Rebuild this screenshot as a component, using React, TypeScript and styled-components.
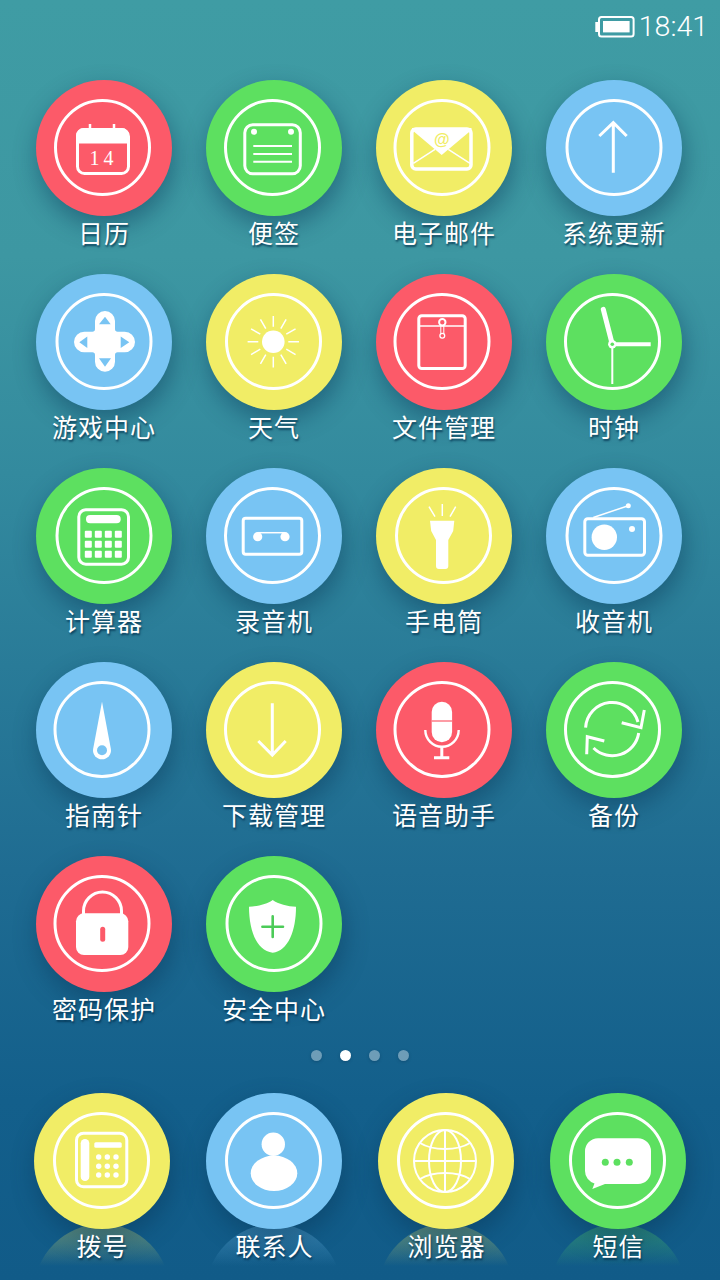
import React from 'react';
import styled, { createGlobalStyle } from 'styled-components';

const RED = '#fc5a69';
const GREEN = '#5de060';
const YELLOW = '#f1ed66';
const BLUE = '#78c4f3';
const WHITE = '#fff';

const GlobalStyle = createGlobalStyle`
    html, body {
        margin: 0;
        padding: 0;
        background: #135f8b;
    }
`;

const Styled = {
    Screen: styled.div`
        position: relative;
        width: 720px;
        height: 1280px;
        overflow: hidden;
        display: flex;
        flex-direction: column;
        background: linear-gradient(180deg, #3f9ca4 0%, #3d97a2 20%, #338a9e 37%, #297b98 52%, #1f6c92 68%, #135f8b 86%, #115b88 100%);
        font-family: 'Noto Sans CJK SC', 'Noto Sans', sans-serif;
    `,
    StatusBar: styled.div`
        height: 80px;
        box-sizing: border-box;
        padding: 11px 12px 0 0;
        display: flex;
        justify-content: flex-end;
        align-items: flex-start;
        gap: 4px;
    `,
    Battery: styled.svg`
        width: 40px;
        height: 24px;
        margin-top: 4px;
    `,
    Time: styled.span`
        font-family: Roboto, 'Liberation Sans', sans-serif;
        font-weight: 300;
        font-size: 28.5px;
        line-height: 32px;
        color: #fff;
    `,
    Grid: styled.div`
        display: grid;
        grid-template-columns: repeat(4, 170px);
        grid-auto-rows: 194px;
        padding: 0 19px;
    `,
    Cell: styled.div`
        position: relative;
        display: flex;
        flex-direction: column;
        align-items: center;
    `,
    Circle: styled.div<{ $color: string }>`
        position: relative;
        width: 136px;
        height: 136px;
        flex: none;
        border-radius: 50%;
        background: ${(p) => p.$color};
        box-shadow: 2px 10px 24px rgba(8, 52, 84, 0.46);
    `,
    Glyph: styled.svg`
        display: block;
        width: 136px;
        height: 136px;
    `,
    Label: styled.div<{ $dock?: boolean }>`
        position: relative;
        font-size: 25px;
        line-height: 32px;
        letter-spacing: 1px;
        padding-left: ${(p) => (p.$dock ? '1px' : '0')};
        color: #fff;
        white-space: nowrap;
        text-shadow: 1px 2px 2px rgba(0, 45, 75, 0.75);
    `,
    Dots: styled.div`
        display: flex;
        justify-content: center;
        gap: 18px;
        padding-right: 1px;
    `,
    Dot: styled.span<{ $active?: boolean }>`
        width: 11px;
        height: 11px;
        border-radius: 50%;
        background: ${(p) => (p.$active ? '#fff' : 'rgba(255, 255, 255, 0.38)')};
        box-shadow: 0 1px 3px rgba(0, 40, 70, 0.3);
    `,
    Dock: styled.div`
        display: grid;
        grid-template-columns: repeat(4, 172px);
        padding: 0 16px;
        margin-top: 32px;
    `,
    Reflection: styled.div<{ $color: string }>`
        position: absolute;
        top: 131px;
        left: 18px;
        width: 136px;
        height: 136px;
        border-radius: 50%;
        background: linear-gradient(180deg, ${(p) => p.$color} 0%, transparent 31%);
        opacity: 0.38;
    `,
};

const Ring: React.FC<{ cx: number }> = ({ cx }) => (
    <circle cx={cx} cy={67.5} r={47} fill="none" stroke={WHITE} strokeWidth={3} />
);

const CalendarIcon = () => (
    <>
        <path d="M54 49V44M78 49V44" stroke={WHITE} strokeWidth={2.5} />
        <rect x={41.5} y={49.5} width={51} height={44} rx={7} fill="none" stroke={WHITE} strokeWidth={3} />
        <path d="M40 63.5V55.5a7.5 7.5 0 0 1 7.5-7.5h38a7.5 7.5 0 0 1 7.5 7.5v8z" fill={WHITE} />
        <text x={67.5} y={85.3} fill={WHITE} fontFamily="'Liberation Serif', serif" fontSize={20} letterSpacing={4} textAnchor="middle">
            14
        </text>
    </>
);

const NoteIcon = () => (
    <>
        <rect x={38.8} y={44.8} width={55.5} height={49} rx={8} fill="none" stroke={WHITE} strokeWidth={3} />
        <circle cx={48} cy={51.7} r={3} fill={WHITE} />
        <circle cx={85} cy={51.7} r={3} fill={WHITE} />
        <path d="M47.3 66H86M47.3 74H86M47.3 81.7H86" stroke={WHITE} strokeWidth={2} />
    </>
);

const MailIcon = () => (
    <>
        <rect x={35.8} y={49} width={59.2} height={40} rx={4} fill="none" stroke={WHITE} strokeWidth={3.5} />
        <path d="M36 48H95.5V50L65.7 75L36 50z" fill={WHITE} />
        <path d="M37.3 83.3L59 69.3M94 83.3L72.3 69.3" stroke={WHITE} strokeWidth={1.5} />
        <text x={65.7} y={64.5} fill={YELLOW} fontFamily="'Liberation Sans', sans-serif" fontWeight={700} fontSize={16} textAnchor="middle">
            @
        </text>
    </>
);

const UpIcon = () => (
    <path d="M67.3 92.7V44M53.3 56L67.3 42.7L80.7 56" fill="none" stroke={WHITE} strokeWidth={3} />
);

const GameIcon = () => (
    <>
        <path
            d="M59 47a10 10 0 0 1 20 0V55Q79 57.7 81.7 57.7H88.7a10.3 10.3 0 0 1 0 20.6H81.7Q79 78.3 79 81V87.7a10 10 0 0 1-20 0V81Q59 78.3 56.3 78.3H48.3a10.3 10.3 0 0 1 0-20.6H56.3Q59 57.7 59 55z"
            fill={WHITE}
        />
        <path d="M69 42.7L63 50.3H74.7zM69 92.7L63 84.3H75zM43.3 68.3L51.3 62.5V74zM93.3 68.3L84.7 62.5V74z" fill={BLUE} />
    </>
);

const SunIcon = () => {
    const rays = Array.from({ length: 12 }, (_, i) => {
        const a = (i * Math.PI) / 6;
        return `M${67.3 + 15 * Math.cos(a)} ${67.7 + 15 * Math.sin(a)}L${67.3 + 25.7 * Math.cos(a)} ${67.7 + 25.7 * Math.sin(a)}`;
    }).join('');
    return (
        <>
            <circle cx={67.3} cy={67.7} r={11.3} fill={WHITE} />
            <path d={rays} stroke={WHITE} strokeWidth={1.5} />
        </>
    );
};

const FolderIcon = () => (
    <>
        <rect x={42.8} y={41.8} width={46.4} height={52.7} rx={3} fill="none" stroke={WHITE} strokeWidth={3} />
        <path d="M43 52H89" stroke={WHITE} strokeWidth={1.5} />
        <path d="M64.8 49V61M67.8 49V61" stroke={WHITE} strokeWidth={1} />
        <circle cx={66.3} cy={48.3} r={3.2} fill={RED} stroke={WHITE} strokeWidth={2} />
        <circle cx={66.3} cy={61.7} r={2.4} fill={RED} stroke={WHITE} strokeWidth={1.3} />
    </>
);

const ClockIcon = () => (
    <>
        <path d="M66.3 70.3L57.3 35.3" stroke={WHITE} strokeWidth={5} strokeLinecap="round" />
        <path d="M66.3 70.3H104.7" stroke={WHITE} strokeWidth={4} />
        <path d="M66.3 70.3V110" stroke={WHITE} strokeWidth={2} />
        <circle cx={66.3} cy={70.3} r={4.2} fill={WHITE} />
        <circle cx={66.3} cy={70.3} r={1.8} fill={GREEN} />
    </>
);

const CalculatorIcon = () => (
    <>
        <rect x={42.8} y={41.8} width={49.7} height={54.4} rx={7} fill="none" stroke={WHITE} strokeWidth={3} />
        <rect x={50} y={47} width={34.7} height={8.3} rx={4.1} fill={WHITE} />
        {[66.3, 76.3, 86.3].map((y) =>
            [52.3, 62.3, 72.3, 82.3].map((x) => (
                <rect key={`${x}-${y}`} x={x - 3.5} y={y - 3.5} width={7} height={7} rx={1} fill={WHITE} />
            )),
        )}
    </>
);

const TapeIcon = () => (
    <>
        <rect x={37.2} y={50.2} width={58.6} height={36} rx={2.5} fill="none" stroke={WHITE} strokeWidth={3} />
        <path d="M51.7 64.7H79" stroke={WHITE} strokeWidth={1.5} />
        <circle cx={51.7} cy={68.7} r={4.6} fill={WHITE} />
        <circle cx={79} cy={68.7} r={4.6} fill={WHITE} />
    </>
);

const TorchIcon = () => (
    <>
        <path d="M54 52.7H78.3L77.2 63L72.3 72V98a3 3 0 0 1-3 3H63a3 3 0 0 1-3-3V72L55.2 63z" fill={WHITE} />
        <path d="M66.3 36V48M53 38.7L59 48.7M79.7 38.7L74 48.7" stroke={WHITE} strokeWidth={1.5} />
    </>
);

const RadioIcon = () => (
    <>
        <rect x={38.8} y={50.8} width={59.7} height={36.4} rx={3} fill="none" stroke={WHITE} strokeWidth={3} />
        <circle cx={58.3} cy={69.3} r={12.7} fill={WHITE} />
        <circle cx={86} cy={61} r={3} fill={WHITE} />
        <path d="M47.3 49.5L82.3 37.7" stroke={WHITE} strokeWidth={1.5} />
        <circle cx={82.3} cy={37.7} r={2.5} fill={WHITE} />
    </>
);

const CompassIcon = () => (
    <>
        <path d="M66 39.7L57.1 87a9 9 0 1 0 17.8 0z" fill={WHITE} />
        <circle cx={66} cy={88.2} r={5} fill={BLUE} />
    </>
);

const DownIcon = () => (
    <path d="M66.3 41.3V91M52.3 79L66.3 93L79.7 79" fill="none" stroke={WHITE} strokeWidth={3} />
);

const MicIcon = () => (
    <>
        <rect x={55.7} y={39.7} width={20.4} height={40.6} rx={10.2} fill={WHITE} />
        <path d="M55.7 59H76" stroke={RED} strokeWidth={1.2} />
        <path d="M49.3 68a16.7 16.7 0 0 0 33.4 0" fill="none" stroke={WHITE} strokeWidth={2.4} />
        <path d="M65.8 85V95M58 95.7H73.3" stroke={WHITE} strokeWidth={3} />
    </>
);

const SyncIcon = () => (
    <g fill="none" stroke={WHITE} strokeWidth={3}>
        <path d="M39.6 65.7A26.7 26.7 0 0 1 92 60" />
        <path d="M75.7 60.7L95 65.7L98.3 48" />
        <path d="M92.7 71A26.7 26.7 0 0 1 47.5 86" />
        <path d="M58.3 79L41.3 74.7L40.7 92.3" />
    </g>
);

const LockIcon = () => (
    <>
        <path d="M47.5 60V55a19 19 0 0 1 38 0v5" fill="none" stroke={WHITE} strokeWidth={3} />
        <rect x={40} y={57.3} width={52.3} height={41.7} rx={8} fill={WHITE} />
        <rect x={64.2} y={70.7} width={5} height={15} rx={2.5} fill={RED} />
    </>
);

const ShieldIcon = () => (
    <>
        <path d="M66.7 44C72 48 82 50.5 90 50.7C90 75 82 95 66.7 96.7C51 95 43 75 43 50.7C51 50.5 61.5 48 66.7 44z" fill={WHITE} />
        <path d="M66.7 60.4V81M56.4 70.7H77" stroke="#4ccb58" strokeWidth={2.6} strokeLinecap="round" />
    </>
);

const PhoneIcon = () => (
    <>
        <rect x={42.5} y={40.2} width={50.3} height={53.6} rx={7} fill="none" stroke={WHITE} strokeWidth={3} />
        <rect x={46.7} y={46} width={8.6} height={42} rx={4.3} fill={WHITE} />
        <rect x={60.3} y={49.3} width={27.4} height={5.4} rx={1.5} fill={WHITE} />
        {[64, 73.3, 82].map((y) =>
            [64.7, 73.3, 82].map((x) => <circle key={`${x}-${y}`} cx={x} cy={y} r={2.7} fill={WHITE} />),
        )}
    </>
);

const ContactIcon = () => (
    <>
        <circle cx={67.3} cy={51.3} r={11.7} fill={WHITE} />
        <ellipse cx={68} cy={80.3} rx={23.3} ry={17.7} fill={WHITE} />
    </>
);

const GlobeIcon = () => (
    <g fill="none" stroke={WHITE} strokeWidth={2}>
        <circle cx={67} cy={68} r={31} />
        <ellipse cx={67} cy={68} rx={16} ry={31} />
        <path d="M67 37V99M36 68H98" />
        <path d="M42 50C55 58 79 58 92 50M42 86C55 78 79 78 92 86" />
    </g>
);

const MessageIcon = () => (
    <>
        <path
            d="M48 45.3H88a13 13 0 0 1 13 13V78a13 13 0 0 1-13 13H55L42.3 96L44.5 90.5A13 13 0 0 1 35 78V58.3a13 13 0 0 1 13-13z"
            fill={WHITE}
        />
        <circle cx={55.3} cy={69.3} r={3.5} fill={GREEN} />
        <circle cx={67} cy={69.3} r={3.5} fill={GREEN} />
        <circle cx={79.3} cy={69.3} r={3.5} fill={GREEN} />
    </>
);

type App = { label: string; color: string; ring: number; Icon: React.FC };

const apps: App[] = [
    { label: '日历', color: RED, ring: 66.5, Icon: CalendarIcon },
    { label: '便签', color: GREEN, ring: 66.5, Icon: NoteIcon },
    { label: '电子邮件', color: YELLOW, ring: 66, Icon: MailIcon },
    { label: '系统更新', color: BLUE, ring: 68, Icon: UpIcon },
    { label: '游戏中心', color: BLUE, ring: 68, Icon: GameIcon },
    { label: '天气', color: YELLOW, ring: 67.5, Icon: SunIcon },
    { label: '文件管理', color: RED, ring: 66, Icon: FolderIcon },
    { label: '时钟', color: GREEN, ring: 66.5, Icon: ClockIcon },
    { label: '计算器', color: GREEN, ring: 68, Icon: CalculatorIcon },
    { label: '录音机', color: BLUE, ring: 66.5, Icon: TapeIcon },
    { label: '手电筒', color: YELLOW, ring: 67.5, Icon: TorchIcon },
    { label: '收音机', color: BLUE, ring: 68, Icon: RadioIcon },
    { label: '指南针', color: BLUE, ring: 66, Icon: CompassIcon },
    { label: '下载管理', color: YELLOW, ring: 66.5, Icon: DownIcon },
    { label: '语音助手', color: RED, ring: 66, Icon: MicIcon },
    { label: '备份', color: GREEN, ring: 66.5, Icon: SyncIcon },
    { label: '密码保护', color: RED, ring: 66, Icon: LockIcon },
    { label: '安全中心', color: GREEN, ring: 68, Icon: ShieldIcon },
];

const dockApps: App[] = [
    { label: '拨号', color: YELLOW, ring: 67.5, Icon: PhoneIcon },
    { label: '联系人', color: BLUE, ring: 67.5, Icon: ContactIcon },
    { label: '浏览器', color: YELLOW, ring: 67.5, Icon: GlobeIcon },
    { label: '短信', color: GREEN, ring: 67.5, Icon: MessageIcon },
];

const AppIcon: React.FC<{ app: App }> = ({ app }) => (
    <Styled.Circle $color={app.color}>
        <Styled.Glyph viewBox="0 0 136 136">
            <Ring cx={app.ring} />
            <app.Icon />
        </Styled.Glyph>
    </Styled.Circle>
);

const Home = () => (
    <Styled.Screen>
        <GlobalStyle />
        <Styled.StatusBar>
            <Styled.Battery viewBox="0 0 40 24">
                <path d="M0.3 7H3.3V17H0.3z" fill="#fff" />
                <rect x={4} y={2} width={34.6} height={19.4} rx={2.5} fill="none" stroke="#fff" strokeWidth={2} />
                <rect x={8} y={6} width={26.6} height={11.4} fill="#fff" />
            </Styled.Battery>
            <Styled.Time>18:41</Styled.Time>
        </Styled.StatusBar>
        <Styled.Grid>
            {apps.map((app) => (
                <Styled.Cell key={app.label}>
                    <AppIcon app={app} />
                    <Styled.Label>{app.label}</Styled.Label>
                </Styled.Cell>
            ))}
        </Styled.Grid>
        <Styled.Dots>
            <Styled.Dot />
            <Styled.Dot $active />
            <Styled.Dot />
            <Styled.Dot />
        </Styled.Dots>
        <Styled.Dock>
            {dockApps.map((app) => (
                <Styled.Cell key={app.label}>
                    <Styled.Reflection $color={app.color} />
                    <AppIcon app={app} />
                    <Styled.Label $dock>{app.label}</Styled.Label>
                </Styled.Cell>
            ))}
        </Styled.Dock>
    </Styled.Screen>
);

export default Home;
